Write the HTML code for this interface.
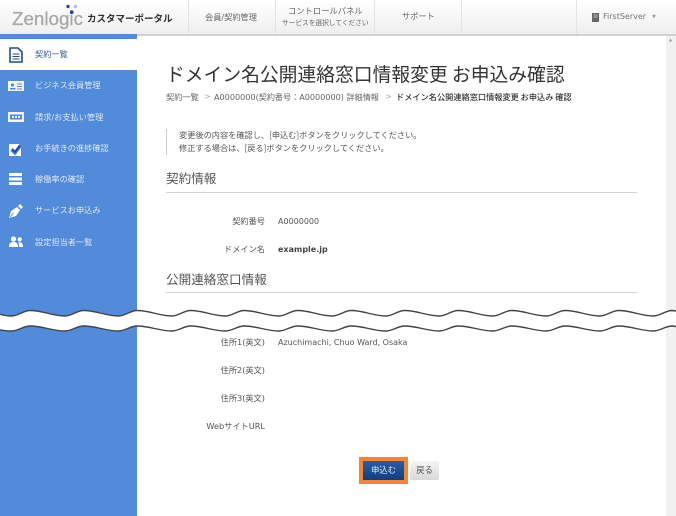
<!DOCTYPE html>
<html lang="ja"><head><meta charset="utf-8"><style>
html,body{margin:0;padding:0}
body{width:676px;height:516px;position:relative;overflow:hidden;background:#fff;font-family:"DejaVu Sans","Noto Sans CJK JP",sans-serif;color:#444}
.a{position:absolute;white-space:nowrap;line-height:1}
.n{font-family:"DejaVu Sans","Noto Sans CJK JP",sans-serif}
.nav{position:absolute;top:0;width:1px;height:34px;background:#e4e4e4}
.m{position:absolute;left:35px;font-size:8.2px;color:#dbe7f7;font-family:"DejaVu Sans","Noto Sans CJK JP",sans-serif;line-height:1;white-space:nowrap}
.l{position:absolute;right:411px;font-size:8.2px;line-height:1;white-space:nowrap;color:#555;font-family:"DejaVu Sans","Noto Sans CJK JP",sans-serif}
.v{position:absolute;left:278px;font-size:8px;line-height:1;white-space:nowrap;color:#555}
.h{position:absolute;left:166px;font-size:12.6px;line-height:1;color:#555;font-family:"Noto Sans CJK JP",sans-serif;white-space:nowrap}
.r{position:absolute;left:166px;width:471px;height:1px;background:#d4d4d4}
svg{position:absolute}
</style></head><body>
<div style="position:absolute;left:0;top:0;width:676px;height:34px;background:linear-gradient(#fff,#efefef)"></div>
<div style="position:absolute;left:0;top:34px;width:676px;height:2px;background:#d2d2d2"></div>
<div class="a" style="left:12px;top:10px;font-size:18.8px;color:#a8a8a8;font-family:'Liberation Sans',sans-serif;-webkit-text-stroke:.3px #a8a8a8">Zenlogic</div>
<svg style="left:0;top:0" width="90" height="20"><circle cx="68" cy="6.5" r="1.7" fill="#1d4f91"/><circle cx="75.5" cy="6.5" r="1.7" fill="#a9c3e3"/><circle cx="71.7" cy="12.2" r="1.9" fill="#1d4f91"/></svg>
<div class="a" style="left:87px;top:14px;font-size:9.5px;color:#333;font-weight:700;font-family:'Noto Sans CJK JP',sans-serif">カスタマーポータル</div>
<div class="nav" style="left:188px"></div><div class="nav" style="left:275px"></div><div class="nav" style="left:374px"></div><div class="nav" style="left:461px"></div><div class="nav" style="left:576px"></div>
<div class="a" style="left:205px;top:13px;font-size:8.2px;color:#666;font-family:'DejaVu Sans','Noto Sans CJK JP',sans-serif">会員/契約管理</div>
<div class="a" style="left:288px;top:7px;font-size:8.3px;color:#666;font-family:'Noto Sans CJK JP',sans-serif">コントロールパネル</div>
<div class="a" style="left:282px;top:19px;font-size:6.7px;color:#666;font-family:'Noto Sans CJK JP',sans-serif">サービスを選択してください</div>
<div class="a" style="left:402px;top:12px;font-size:8.2px;color:#666;font-family:'Noto Sans CJK JP',sans-serif">サポート</div>
<svg style="left:592px;top:13px" width="7" height="9"><path d="M0 0H7V9H0Z" fill="#666"/><path d="M1.5 2H5.5M1.5 4H5.5" stroke="#ddd" stroke-width=".8"/></svg>
<div class="a" style="left:603px;top:13px;font-size:8px;color:#777">FirstServer</div>
<div class="a" style="left:652px;top:15px;font-size:5px;color:#999">▼</div>

<div style="position:absolute;left:0;top:34px;width:137px;height:482px;background:#528bd9"></div>
<div style="position:absolute;left:0;top:39px;width:137px;height:31px;background:#fff"></div>
<div style="position:absolute;left:666px;top:36px;width:10px;height:480px;background:#f1f1f1"></div>
<div class="a" style="left:669px;top:38px;font-size:4px;color:#999">▲</div>

<svg style="left:9px;top:47px" width="14" height="16" fill="none" stroke="#1d4f91" stroke-width="1.6"><path d="M1 1H9L13 5V15H1Z"/><path d="M3.5 7H10.5M3.5 9.5H10.5M3.5 12H10.5" stroke-width="1.1"/></svg>
<div class="m" style="top:50px;color:#34598d">契約一覧</div>
<svg style="left:8px;top:81px" width="16" height="10"><rect width="16" height="10" fill="#f2f6fc"/><circle cx="4.5" cy="4" r="1.6" fill="#528bd9"/><path d="M2 8.5H7.5V7H2ZM9 2.5H14V3.5H9ZM9 5H14V6H9ZM9 7.5H14V8.5H9Z" fill="#528bd9"/></svg>
<div class="m" style="top:81px">ビジネス会員管理</div>
<svg style="left:8px;top:112px" width="16" height="10"><rect width="16" height="10" fill="#f2f6fc"/><rect x="2" y="2.5" width="12" height="5" fill="#528bd9"/><path d="M4 4H6V6H4ZM7 4H9V6H7ZM10 4H12V6H10Z" fill="#f2f6fc"/></svg>
<div class="m" style="top:113px">請求/お支払い管理</div>
<svg style="left:9px;top:142px" width="14" height="14"><rect y="2" width="12" height="12" fill="#fff"/><path d="M2.5 7.5L6 11L13 1.5" fill="none" stroke="#528bd9" stroke-width="3.4"/><path d="M3 7L6 10L11 3.5" fill="none" stroke="#1d4f91" stroke-width="2"/></svg>
<div class="m" style="top:144px">お手続きの進捗確認</div>
<svg style="left:9px;top:173px" width="13" height="12"><rect width="13" height="3" fill="#fff"/><rect y="4.5" width="13" height="3" fill="#fff"/><rect y="9" width="13" height="3" fill="#fff"/></svg>
<div class="m" style="top:175px">稼働率の確認</div>
<svg style="left:9px;top:204px" width="14" height="14"><path d="M0 14L2 7L8 3L11 6L7 12Z" fill="#fff"/><path d="M9 2L11 0L14 3L12 5Z" fill="#fff"/><path d="M1 13L4.5 9" stroke="#528bd9" stroke-width=".9"/></svg>
<div class="m" style="top:206px">サービスお申込み</div>
<svg style="left:9px;top:236px" width="14" height="11" fill="#fff"><circle cx="4.5" cy="3" r="2.6"/><path d="M0 11C0 7 2 6 4.5 6S9 7 9 11Z"/><circle cx="10.7" cy="3.4" r="2.1"/><path d="M9.5 6.5C12 5.6 14 7 14 11H10C10 9 10 8 9.5 6.5Z"/></svg>
<div class="m" style="top:238px">設定担当者一覧</div>

<div class="a" style="left:166px;top:65px;font-size:18.8px;color:#333;font-family:'Noto Sans CJK JP',sans-serif">ドメイン名公開連絡窓口情報変更 お申込み確認</div>
<div class="a n" style="left:166px;top:93px;font-size:8.2px;color:#666">契約一覧</div>
<div class="a" style="left:204px;top:93px;font-size:8px;color:#aaa">&gt;</div>
<div class="a n" style="left:214px;top:93px;font-size:8.1px;color:#666">A0000000(契約番号：A0000000) 詳細情報</div>
<div class="a" style="left:385px;top:93px;font-size:8px;color:#aaa">&gt;</div>
<div class="a" style="left:396px;top:93px;font-size:8.2px;color:#333;font-weight:500;font-family:'Noto Sans CJK JP',sans-serif">ドメイン名公開連絡窓口情報変更 お申込み 確認</div>

<div style="position:absolute;left:166px;top:129px;width:1px;height:26px;background:#ccc"></div>
<div class="a" style="left:179px;top:131px;font-size:8.2px;color:#555;font-family:'Noto Sans CJK JP',sans-serif">変更後の内容を確認し、[申込む]ボタンをクリックしてください。</div>
<div class="a" style="left:179px;top:144px;font-size:8.2px;color:#555;font-family:'Noto Sans CJK JP',sans-serif">修正する場合は、[戻る]ボタンをクリックしてください。</div>

<div class="h" style="top:172px">契約情報</div><div class="r" style="top:192px"></div>
<div class="l" style="top:217px">契約番号</div><div class="v" style="top:218px">A0000000</div>
<div class="l" style="top:245px">ドメイン名</div><div class="v" style="top:246px;font-weight:bold;color:#444">example.jp</div>
<div class="h" style="top:273px">公開連絡窓口情報</div><div class="r" style="top:292px"></div>

<svg style="left:0;top:0;overflow:hidden" width="676" height="516">
<path d="M0 314.3c3.8 1 7.5 1.7 11.5 1.7c6.5 0 12-5.5 18.5-5.5c12.6 0 22.4 5.5 35 5.5c6.5 0 12-5.5 18.5-5.5c12.6 0 22.4 5.5 35 5.5c6.5 0 12-5.5 18.5-5.5c12.6 0 22.4 5.5 35 5.5c6.5 0 12-5.5 18.5-5.5c12.6 0 22.4 5.5 35 5.5c6.5 0 12-5.5 18.5-5.5c12.6 0 22.4 5.5 35 5.5c6.5 0 12-5.5 18.5-5.5c12.6 0 22.4 5.5 35 5.5c6.5 0 12-5.5 18.5-5.5c12.6 0 22.4 5.5 35 5.5c6.5 0 12-5.5 18.5-5.5c12.6 0 22.4 5.5 35 5.5c6.5 0 12-5.5 18.5-5.5c12.6 0 22.4 5.5 35 5.5c6.5 0 12-5.5 18.5-5.5c12.6 0 22.4 5.5 35 5.5c6.5 0 12-5.5 18.5-5.5c12.6 0 22.4 5.5 35 5.5c6.5 0 12-5.5 18.5-5.5c12.6 0 22.4 5.5 35 5.5c6.5 0 12-5.5 18.5-5.5l4 .5L676 326.5l-4-.5c-6.5 0-12 5-18.5 5c-12.6 0-22.4-5-35-5c-6.5 0-12 5-18.5 5c-12.6 0-22.4-5-35-5c-6.5 0-12 5-18.5 5c-12.6 0-22.4-5-35-5c-6.5 0-12 5-18.5 5c-12.6 0-22.4-5-35-5c-6.5 0-12 5-18.5 5c-12.6 0-22.4-5-35-5c-6.5 0-12 5-18.5 5c-12.6 0-22.4-5-35-5c-6.5 0-12 5-18.5 5c-12.6 0-22.4-5-35-5c-6.5 0-12 5-18.5 5c-12.6 0-22.4-5-35-5c-6.5 0-12 5-18.5 5c-12.6 0-22.4-5-35-5c-6.5 0-12 5-18.5 5c-12.6 0-22.4-5-35-5c-6.5 0-12 5-18.5 5c-12.6 0-22.4-5-35-5c-6.5 0-12 5-18.5 5c-12.6 0-22.4-5-35-5c-6.5 0-12 5-18.5 5c-4 0-7.7-.3-11.5-1.2Z" fill="#fff"/>
<path d="M0 314.3c3.8 1 7.5 1.7 11.5 1.7c6.5 0 12-5.5 18.5-5.5c12.6 0 22.4 5.5 35 5.5c6.5 0 12-5.5 18.5-5.5c12.6 0 22.4 5.5 35 5.5c6.5 0 12-5.5 18.5-5.5c12.6 0 22.4 5.5 35 5.5c6.5 0 12-5.5 18.5-5.5c12.6 0 22.4 5.5 35 5.5c6.5 0 12-5.5 18.5-5.5c12.6 0 22.4 5.5 35 5.5c6.5 0 12-5.5 18.5-5.5c12.6 0 22.4 5.5 35 5.5c6.5 0 12-5.5 18.5-5.5c12.6 0 22.4 5.5 35 5.5c6.5 0 12-5.5 18.5-5.5c12.6 0 22.4 5.5 35 5.5c6.5 0 12-5.5 18.5-5.5c12.6 0 22.4 5.5 35 5.5c6.5 0 12-5.5 18.5-5.5c12.6 0 22.4 5.5 35 5.5c6.5 0 12-5.5 18.5-5.5c12.6 0 22.4 5.5 35 5.5c6.5 0 12-5.5 18.5-5.5c12.6 0 22.4 5.5 35 5.5c6.5 0 12-5.5 18.5-5.5l4 .5" fill="none" stroke="#444" stroke-width="1.4"/>
<path d="M0 329.8c3.8 .9 7.5 1.2 11.5 1.2c6.5 0 12-5 18.5-5c12.6 0 22.4 5 35 5c6.5 0 12-5 18.5-5c12.6 0 22.4 5 35 5c6.5 0 12-5 18.5-5c12.6 0 22.4 5 35 5c6.5 0 12-5 18.5-5c12.6 0 22.4 5 35 5c6.5 0 12-5 18.5-5c12.6 0 22.4 5 35 5c6.5 0 12-5 18.5-5c12.6 0 22.4 5 35 5c6.5 0 12-5 18.5-5c12.6 0 22.4 5 35 5c6.5 0 12-5 18.5-5c12.6 0 22.4 5 35 5c6.5 0 12-5 18.5-5c12.6 0 22.4 5 35 5c6.5 0 12-5 18.5-5c12.6 0 22.4 5 35 5c6.5 0 12-5 18.5-5c12.6 0 22.4 5 35 5c6.5 0 12-5 18.5-5c12.6 0 22.4 5 35 5c6.5 0 12-5 18.5-5l4 .5" fill="none" stroke="#444" stroke-width="1.4"/>
</svg>

<div class="l" style="top:338px">住所1(英文)</div><div class="v" style="top:339px">Azuchimachi, Chuo Ward, Osaka</div>
<div class="l" style="top:366px">住所2(英文)</div>
<div class="l" style="top:394px">住所3(英文)</div>
<div class="l" style="top:422px">WebサイトURL</div>

<div style="position:absolute;left:359px;top:457px;width:49px;height:27px;background:#f58535"></div>
<div class="a" style="left:363px;top:461px;width:41px;height:19px;background:linear-gradient(#275ea6,#0f3f80);color:#dfe8f5;font-size:8.4px;line-height:19px;text-align:center;font-family:'Noto Sans CJK JP',sans-serif">申込む</div>
<div class="a" style="left:410px;top:461px;width:29px;height:19px;background:linear-gradient(#f5f5f5,#d8d8d8);border-radius:2px;color:#555;font-size:8.4px;line-height:19px;text-align:center;font-family:'Noto Sans CJK JP',sans-serif">戻る</div>
</body></html>
